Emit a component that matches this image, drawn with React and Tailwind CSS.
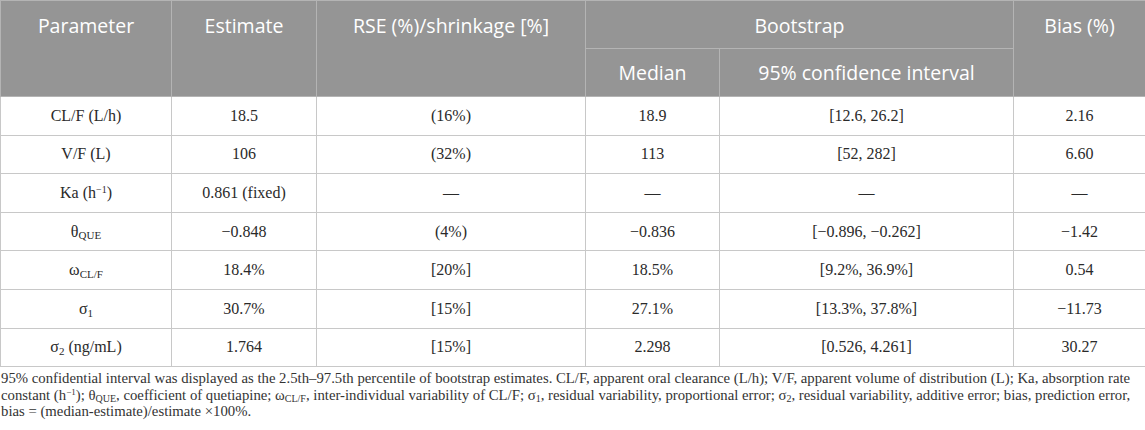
const rows = [
  { p: <>CL/F (L/h)</>, est: '18.5', rse: '(16%)', med: '18.9', ci: '[12.6, 26.2]', bias: '2.16' },
  { p: <>V/F (L)</>, est: '106', rse: '(32%)', med: '113', ci: '[52, 282]', bias: '6.60' },
  { p: <>Ka (h<sup className="text-[10px]">−1</sup>)</>, est: '0.861 (fixed)', rse: '—', med: '—', ci: '—', bias: '—' },
  { p: <>θ<sub className="text-[11px]">QUE</sub></>, est: '−0.848', rse: '(4%)', med: '−0.836', ci: '[−0.896, −0.262]', bias: '−1.42' },
  { p: <>ω<sub className="text-[11px]">CL/F</sub></>, est: '18.4%', rse: '[20%]', med: '18.5%', ci: '[9.2%, 36.9%]', bias: '0.54' },
  { p: <>σ<sub className="text-[11px]">1</sub></>, est: '30.7%', rse: '[15%]', med: '27.1%', ci: '[13.3%, 37.8%]', bias: '−11.73' },
  { p: <>σ<sub className="text-[11px]">2</sub> (ng/mL)</>, est: '1.764', rse: '[15%]', med: '2.298', ci: '[0.526, 4.261]', bias: '30.27' },
]

const head = 'bg-[#959595] text-white font-normal border border-[#b4b4b4]'
const cell = 'border border-[#c8c8c8] text-center'

export default function App() {
  return (
    <div className="w-[1145px] bg-white" style={{ fontFamily: '"Liberation Serif", serif' }}>
      <table className="w-[1145px] border-collapse table-fixed text-[16px] text-[#2a2a2a]">
        <colgroup>
          <col className="w-[171px]" />
          <col className="w-[145px]" />
          <col className="w-[269px]" />
          <col className="w-[134px]" />
          <col className="w-[294px]" />
          <col className="w-[132px]" />
        </colgroup>
        <thead className="text-[19.5px]" style={{ fontFamily: '"Open Sans", sans-serif' }}>
          <tr className="h-[48px]">
            <th rowSpan={2} className={`${head} align-top pt-[10px]`}>Parameter</th>
            <th rowSpan={2} className={`${head} align-top pt-[10px]`}>Estimate</th>
            <th rowSpan={2} className={`${head} align-top pt-[10px]`}>RSE (%)/shrinkage [%]</th>
            <th colSpan={2} className={`${head} pt-[3px]`}>Bootstrap</th>
            <th rowSpan={2} className={`${head} align-top pt-[10px]`}>Bias (%)</th>
          </tr>
          <tr className="h-[48px]">
            <th className={head}>Median</th>
            <th className={head}>95% confidence interval</th>
          </tr>
        </thead>
        <tbody>
          {rows.map((r, i) => (
            <tr key={i} className="h-[38.6px]">
              <td className={cell}>{r.p}</td>
              <td className={cell}>{r.est}</td>
              <td className={cell}>{r.rse}</td>
              <td className={cell}>{r.med}</td>
              <td className={cell}>{r.ci}</td>
              <td className={cell}>{r.bias}</td>
            </tr>
          ))}
        </tbody>
      </table>
      <p className="text-[14.75px] leading-[16.5px] text-[#333] pt-[3px] pl-px">
        95% confidential interval was displayed as the 2.5th–97.5th percentile of bootstrap estimates. CL/F, apparent oral clearance (L/h); V/F, apparent volume of distribution (L); Ka, absorption rate
        <br />
        constant (h<sup className="text-[9px]">−1</sup>); θ<sub className="text-[10px]">QUE</sub>, coefficient of quetiapine; ω<sub className="text-[10px]">CL/F</sub>, inter-individual variability of CL/F; σ<sub className="text-[10px]">1</sub>, residual variability, proportional error; σ<sub className="text-[10px]">2</sub>, residual variability, additive error; bias, prediction error,
        <br />
        bias = (median-estimate)/estimate ×100%.
      </p>
    </div>
  )
}
